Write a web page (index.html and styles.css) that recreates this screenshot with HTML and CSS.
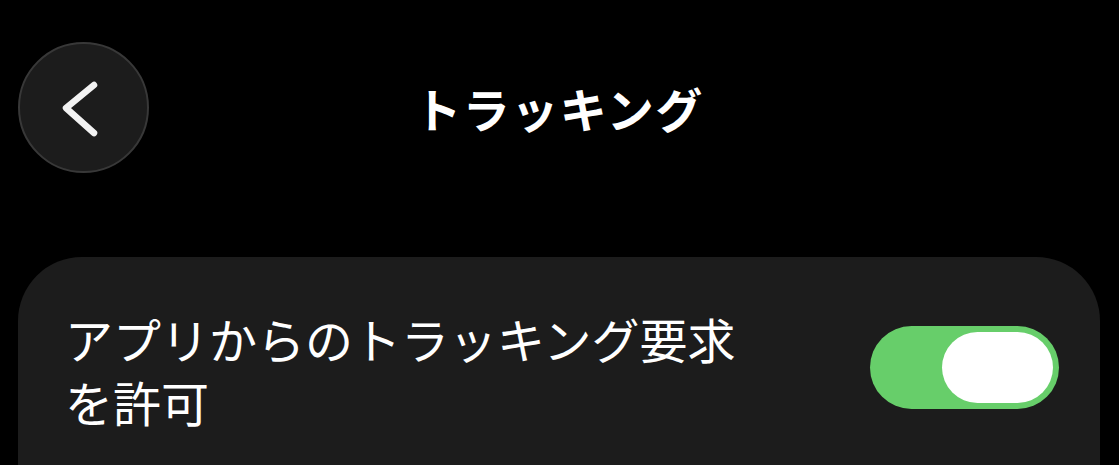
FILE: index.html
```html
<!DOCTYPE html>
<html lang="ja">
<head>
<meta charset="utf-8">
<link rel="stylesheet" href="styles.css">
</head>
<body>
<div class="screen">
  <header class="nav">
    <div class="back">
      <svg class="chev" viewBox="0 0 131 131" width="131" height="131">
        <path d="M76 43 L48 66 L76 91" fill="none" stroke="#f2f2f2" stroke-width="6.5" stroke-linecap="round" stroke-linejoin="round"/>
      </svg>
    </div>
    <h1 class="title">トラッキング</h1>
    <div class="spacer"></div>
  </header>
  <section class="card">
    <div class="row">
      <p class="label">アプリからのトラッキング要求を許可</p>
      <div class="toggle"><div class="knob"></div></div>
    </div>
  </section>
</div>
</body>
</html>
```
FILE: styles.css
```css
html, body {
  margin: 0;
  padding: 0;
  background: #000;
  overflow: hidden;
  height: 465px;
}
.screen {
  padding: 42px 19px 0 18px;
  font-family: "Noto Sans CJK JP", "Noto Sans", sans-serif;
  color: #fff;
}
.nav {
  display: grid;
  grid-template-columns: 131px 1fr 131px;
  align-items: center;
  height: 131px;
}
.back {
  width: 131px;
  height: 131px;
  box-sizing: border-box;
  border-radius: 50%;
  background: #1c1c1c;
  border: 2px solid #383838;
  display: flex;
  align-items: center;
  justify-content: center;
}
.chev {
  display: block;
  flex: none;
}
.title {
  margin: 0;
  text-align: center;
  font-size: 47px;
  font-weight: 700;
  line-height: 1;
  letter-spacing: 1.5px;
}
.card {
  margin-top: 84px;
  height: 280px;
  background: #1c1c1c;
  border-radius: 64px;
  box-sizing: border-box;
  padding: 50px 41px 0 47px;
}
.row {
  display: flex;
  align-items: center;
  justify-content: space-between;
}
.label {
  margin: 0;
  width: 700px;
  font-size: 48px;
  line-height: 63px;
  font-weight: 400;
  color: #fff;
}
.toggle {
  width: 189px;
  height: 83px;
  box-sizing: border-box;
  padding: 6px;
  border-radius: 42px;
  background: #67ce6a;
  display: flex;
  justify-content: flex-end;
  margin-top: -6px;
}
.knob {
  width: 111px;
  height: 71px;
  border-radius: 36px;
  background: #fff;
}
```
